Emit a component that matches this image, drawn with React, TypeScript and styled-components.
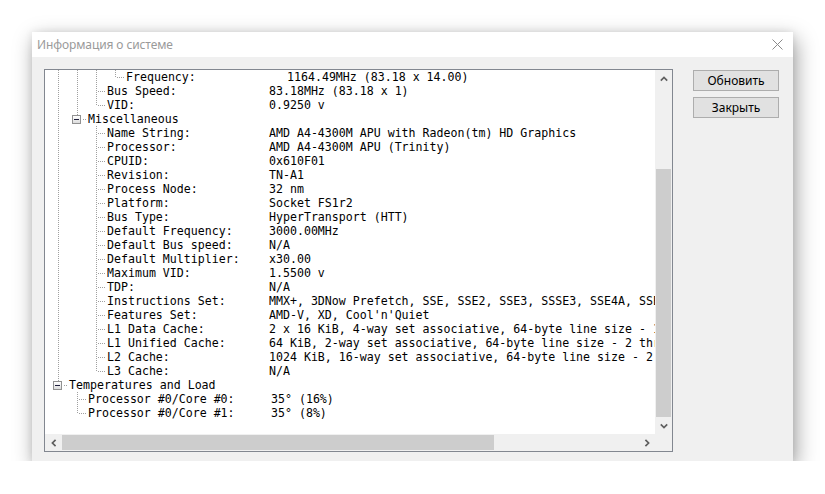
import styled, { createGlobalStyle } from "styled-components"

const GlobalStyle = createGlobalStyle`
  html, body {
    margin: 0;
    padding: 0;
    background: #ffffff;
  }
`

const Page = styled.div`
  padding: 32px 0 0 32px;
`

const Window = styled.div`
  width: 761px;
  height: 429px;
  display: flex;
  flex-direction: column;
  background: #f0f0f0;
  box-shadow: 3px 7px 20px rgba(0, 0, 0, 0.38), 0 0 8px rgba(0, 0, 0, 0.08);
`

const TitleBar = styled.div`
  height: 25px;
  flex: none;
  display: flex;
  align-items: center;
  justify-content: space-between;
  padding: 0 10px 0 5px;
  background: #ffffff;
`

const Title = styled.span`
  font-family: "Noto Sans", "Open Sans", sans-serif;
  font-size: 12px;
  color: #9a9a9a;
  letter-spacing: -0.1px;
`

const Body = styled.div`
  flex: 1;
  display: flex;
  gap: 20px;
  padding: 12px 14px 9px 12px;
`

const TreeBox = styled.div`
  width: 630px;
  height: 383px;
  box-sizing: border-box;
  border: 1px solid #828790;
  background: #ffffff;
  display: grid;
  grid-template-columns: 1fr 17px;
  grid-template-rows: 1fr 17px;
`

const Viewport = styled.div`
  overflow: hidden;
  padding-left: 4px;
  font-family: "DejaVu Sans Mono", "Liberation Mono", monospace;
  font-size: 11.6px;
  color: #000000;
`

const Row = styled.div`
  display: flex;
  height: 14px;
  line-height: 14px;
  white-space: nowrap;
`

const Guide = styled.span<{ $kind: string }>`
  position: relative;
  flex: none;
  width: 19px;
  height: 14px;

  &::before {
    content: "";
    display: ${(p) => (p.$kind === " " ? "none" : "block")};
    position: absolute;
    left: 9px;
    top: 0;
    width: 1px;
    height: ${(p) => (p.$kind === "I" || p.$kind === "T" ? "14px" : "7px")};
    background: repeating-linear-gradient(to bottom, #a0a0a0 0 1px, transparent 1px 2px);
  }

  &::after {
    content: "";
    display: ${(p) => (p.$kind === "T" || p.$kind === "L" || p.$kind === "B" ? "block" : "none")};
    position: absolute;
    left: ${(p) => (p.$kind === "B" ? "15px" : "11px")};
    top: 7px;
    width: ${(p) => (p.$kind === "B" ? "4px" : "8px")};
    height: 1px;
    background: repeating-linear-gradient(to right, #a0a0a0 0 1px, transparent 1px 2px);
  }
`

const Expander = styled.span`
  position: absolute;
  left: 4px;
  top: 3px;
  width: 9px;
  height: 9px;
  box-sizing: border-box;
  border: 1px solid #919191;
  background: linear-gradient(#ffffff, #dcdcdc);

  &::after {
    content: "";
    position: absolute;
    left: 1px;
    top: 3px;
    width: 5px;
    height: 1px;
    background: #1e1e3c;
  }
`

const Label = styled.span<{ $w?: number }>`
  flex: none;
  padding-left: 1px;
  width: ${(p) => (p.$w ? `${p.$w}px` : "auto")};
`

const Value = styled.span`
  flex: none;
`

const VScroll = styled.div`
  background: #f0f0f0;
  display: flex;
  flex-direction: column;
`

const HScroll = styled.div`
  background: #f0f0f0;
  display: flex;
`

const Corner = styled.div`
  background: #f0f0f0;
`

const ArrowCell = styled.div`
  flex: none;
  width: 17px;
  height: 17px;
  display: flex;
  align-items: center;
  justify-content: center;
`

const Track = styled.div<{ $vertical?: boolean }>`
  flex: 1;
  display: flex;
  flex-direction: ${(p) => (p.$vertical ? "column" : "row")};
  justify-content: ${(p) => (p.$vertical ? "flex-end" : "flex-start")};
`

const Thumb = styled.div<{ $vertical?: boolean; $size: number }>`
  background: #cdcdcd;
  ${(p) =>
    p.$vertical
      ? `height: ${p.$size}px; margin: 0 1px;`
      : `width: ${p.$size}px; margin: 1px 0;`}
`

const Buttons = styled.div`
  width: 86px;
  display: flex;
  flex-direction: column;
  gap: 6px;
  padding-top: 1px;
`

const Button = styled.button`
  height: 21px;
  padding: 0;
  border: 1px solid #adadad;
  background: #e1e1e1;
  font-family: "Noto Sans", "Open Sans", sans-serif;
  font-size: 12px;
  color: #000000;
`

const Chevron = ({ dir }: { dir: "up" | "down" | "left" | "right" }) => {
  const rot = { up: 0, right: 90, down: 180, left: 270 }[dir]
  return (
    <svg width="8" height="8" viewBox="0 0 8 8" style={{ transform: `rotate(${rot}deg)` }}>
      <path d="M0.8 5.6 L4 2.4 L7.2 5.6" fill="none" stroke="#606060" strokeWidth="1.7" />
    </svg>
  )
}

const CloseIcon = () => (
  <svg width="11" height="11" viewBox="0 0 11 11">
    <path d="M0.5 0.5 L10.5 10.5 M10.5 0.5 L0.5 10.5" stroke="#8a8a8a" strokeWidth="1" />
  </svg>
)

type Item = { g: string; label: string; value?: string; w?: number }

const items: Item[] = [
  { g: "IIIL", label: "Frequency:", value: "1164.49MHz (83.18 x 14.00)", w: 161 },
  { g: "IIT", label: "Bus Speed:", value: "83.18MHz (83.18 x 1)", w: 162 },
  { g: "IIL", label: "VID:", value: "0.9250 v", w: 162 },
  { g: "IB", label: "Miscellaneous" },
  { g: "I T", label: "Name String:", value: "AMD A4-4300M APU with Radeon(tm) HD Graphics", w: 162 },
  { g: "I T", label: "Processor:", value: "AMD A4-4300M APU (Trinity)", w: 162 },
  { g: "I T", label: "CPUID:", value: "0x610F01", w: 162 },
  { g: "I T", label: "Revision:", value: "TN-A1", w: 162 },
  { g: "I T", label: "Process Node:", value: "32 nm", w: 162 },
  { g: "I T", label: "Platform:", value: "Socket FS1r2", w: 162 },
  { g: "I T", label: "Bus Type:", value: "HyperTransport (HTT)", w: 162 },
  { g: "I T", label: "Default Frequency:", value: "3000.00MHz", w: 162 },
  { g: "I T", label: "Default Bus speed:", value: "N/A", w: 162 },
  { g: "I T", label: "Default Multiplier:", value: "x30.00", w: 162 },
  { g: "I T", label: "Maximum VID:", value: "1.5500 v", w: 162 },
  { g: "I T", label: "TDP:", value: "N/A", w: 162 },
  {
    g: "I T",
    label: "Instructions Set:",
    value: "MMX+, 3DNow Prefetch, SSE, SSE2, SSE3, SSSE3, SSE4A, SSE4.1, SSE4.2, AES, AVX, XOP, FMA3, FMA4",
    w: 162,
  },
  { g: "I T", label: "Features Set:", value: "AMD-V, XD, Cool'n'Quiet", w: 162 },
  {
    g: "I T",
    label: "L1 Data Cache:",
    value: "2 x 16 KiB, 4-way set associative, 64-byte line size - 1 thread",
    w: 162,
  },
  {
    g: "I T",
    label: "L1 Unified Cache:",
    value: "64 KiB, 2-way set associative, 64-byte line size - 2 threads",
    w: 162,
  },
  {
    g: "I T",
    label: "L2 Cache:",
    value: "1024 KiB, 16-way set associative, 64-byte line size - 2 threads",
    w: 162,
  },
  { g: "I L", label: "L3 Cache:", value: "N/A", w: 162 },
  { g: "B", label: "Temperatures and Load" },
  { g: " T", label: "Processor #0/Core #0:", value: "35° (16%)", w: 183 },
  { g: " L", label: "Processor #0/Core #1:", value: "35° (8%)", w: 183 },
]

const App = () => (
  <Page>
    <GlobalStyle />
    <Window>
      <TitleBar>
        <Title>Информация о системе</Title>
        <CloseIcon />
      </TitleBar>
      <Body>
        <TreeBox>
          <Viewport>
            {items.map((it, i) => (
              <Row key={i}>
                {it.g.split("").map((k, j) => (
                  <Guide key={j} $kind={k}>
                    {k === "B" && <Expander />}
                  </Guide>
                ))}
                <Label $w={it.w}>{it.label}</Label>
                {it.value && <Value>{it.value}</Value>}
              </Row>
            ))}
          </Viewport>
          <VScroll>
            <ArrowCell>
              <Chevron dir="up" />
            </ArrowCell>
            <Track $vertical>
              <Thumb $vertical $size={248} />
            </Track>
            <ArrowCell>
              <Chevron dir="down" />
            </ArrowCell>
          </VScroll>
          <HScroll>
            <ArrowCell>
              <Chevron dir="left" />
            </ArrowCell>
            <Track>
              <Thumb $size={432} />
            </Track>
            <ArrowCell>
              <Chevron dir="right" />
            </ArrowCell>
          </HScroll>
          <Corner />
        </TreeBox>
        <Buttons>
          <Button>Обновить</Button>
          <Button>Закрыть</Button>
        </Buttons>
      </Body>
    </Window>
  </Page>
)

export default App
